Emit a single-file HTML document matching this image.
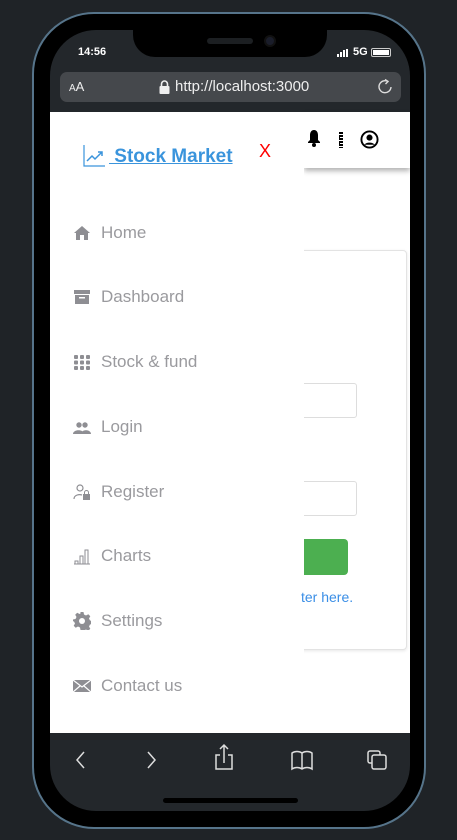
<!DOCTYPE html>
<html><head><style>
*{margin:0;padding:0;box-sizing:border-box}
body{width:457px;height:840px;background:#1f2327;position:relative;overflow:hidden;font-family:"Liberation Sans",sans-serif}
.frame{position:absolute;left:32px;top:12px;width:394px;height:817px;border-radius:62px;border:2px solid #56748a;background:#000}
.screen{position:absolute;left:50px;top:30px;width:360px;height:781px;border-radius:46px;background:#23272b;overflow:hidden}
.notch{position:absolute;left:83px;top:-10px;width:194px;height:37px;background:#000;border-radius:0 0 22px 22px}
.speaker{position:absolute;left:157px;top:8px;width:46px;height:6px;border-radius:3px;background:#1c1f22}
.cam{position:absolute;left:214px;top:5px;width:12px;height:12px;border-radius:6px;background:#1a1d2a;border:2px solid #111}
.web{position:absolute;left:0;top:82px;width:360px;height:621px;background:#fff}
.bar{position:absolute;left:10px;top:42px;width:341px;height:30px;border-radius:7px;background:#45484c;color:#eee;font-size:14px}
.side{position:absolute;left:0;top:0;width:254px;height:621px;background:#fff}
.item{position:absolute;left:23px;color:#9a9a9e;font-size:17px;display:flex;align-items:center}
.item svg{width:18px;height:18px;margin-right:10px;fill:#8e8e93}
</style></head><body>
<div class="frame"></div>
<div class="screen">
 <div style="position:absolute;left:28px;top:16px;color:#fff;font-size:11px;font-weight:bold">14:56</div>
 <div style="position:absolute;left:287px;top:19px;display:flex;align-items:flex-end;gap:1px"><i style="width:2px;height:3px;background:#fff"></i><i style="width:2px;height:5px;background:#fff"></i><i style="width:2px;height:7px;background:#fff"></i><i style="width:2px;height:8px;background:#fff"></i></div>
 <div style="position:absolute;left:303px;top:16px;color:#fff;font-size:11px;font-weight:bold">5G</div>
 <div style="position:absolute;left:321px;top:18px;width:20px;height:9px;border:1px solid #ccc;border-radius:2px;padding:1px"><div style="background:#fff;width:100%;height:100%"></div></div>
 <div class="bar"><span style="position:absolute;left:9px;top:7px;font-size:13px"><small style="font-size:10px">A</small>A</span>
  <svg style="position:absolute;left:99px;top:8px" width="11" height="14" viewBox="0 0 11 14"><rect x="0.5" y="6" width="10" height="8" rx="1" fill="#eee"/><path d="M2.5 6V4a3 3 0 0 1 6 0v2" fill="none" stroke="#eee" stroke-width="1.6"/></svg>
  <span style="position:absolute;left:115px;top:6px;font-size:15px">http://localhost:3000</span>
  <svg style="position:absolute;left:316px;top:6px" width="18" height="18" viewBox="0 0 18 18"><path d="M12 3.5A6 6 0 1 0 15 9" fill="none" stroke="#ddd" stroke-width="1.4"/><path d="M9 1.5l3 2-2.5 2.5" fill="none" stroke="#ddd" stroke-width="1.4"/></svg></div>
 <div class="web">
  <div style="position:absolute;left:254px;top:0;width:106px;height:56px;background:#fff;box-shadow:0 3px 5px rgba(0,0,0,.3)"></div>
  <svg style="position:absolute;left:257px;top:17px" width="14" height="18" viewBox="0 0 14 18"><path d="M7 1C4 1 3 4 3 6v5L1 13v1h12v-1l-2-2V6c0-2-1-5-4-5z"/><circle cx="7" cy="16" r="2"/></svg>
  <div style="position:absolute;left:289px;top:20px;width:4px;height:16px;background:repeating-linear-gradient(#000 0 2px,#fff 2px 3px);border-left:1px dotted #000"></div>
  <svg style="position:absolute;left:310px;top:18px" width="19" height="19" viewBox="0 0 20 20"><circle cx="10" cy="10" r="8.5" fill="none" stroke="#000" stroke-width="2"/><circle cx="10" cy="8" r="3.2"/><path d="M4.5 15.5c2-3 9-3 11 0" fill="#000"/></svg>
  <div style="position:absolute;left:250px;top:138px;width:107px;height:400px;border:1px solid #e3e3e3;border-radius:4px;background:#fff;box-shadow:0 1px 3px rgba(0,0,0,.1)"></div>
  <div style="position:absolute;left:250px;top:271px;width:57px;height:35px;border:1px solid #ddd;border-radius:3px"></div>
  <div style="position:absolute;left:250px;top:369px;width:57px;height:35px;border:1px solid #ddd;border-radius:3px"></div>
  <div style="position:absolute;left:250px;top:427px;width:48px;height:36px;background:#4caf50;border-radius:4px"></div>
  <div class="side">
   <div style="position:absolute;left:33px;top:31px;display:flex;align-items:flex-end;color:#3a94dc;font-size:19px;font-weight:bold;text-decoration:underline">
    <svg width="22" height="25" viewBox="0 0 22 25" style="margin-right:4px"><path d="M1 2v21h21" fill="none" stroke="#3a94dc" stroke-width="1.2"/><path d="M4 18l5-5 3 3 7-7M15 9h4v4" fill="none" stroke="#3a94dc" stroke-width="1.5"/></svg>
    <span>&nbsp;Stock Market</span></div>
   <div style="position:absolute;left:209px;top:29px;color:#f00;font-size:18px">X</div>
   <div class="item" style="top:111px"><svg viewBox="0 0 18 18"><path d="M9 2L1 9h2v7h4v-5h4v5h4V9h2z"/></svg>Home</div>
   <div class="item" style="top:175px"><svg viewBox="0 0 18 18"><rect x="1" y="2" width="16" height="4"/><path d="M2 7h14v9H2z"/><rect x="6" y="9" width="6" height="1.5" fill="#fff"/></svg>Dashboard</div>
   <div class="item" style="top:240px"><svg viewBox="0 0 18 18"><g><rect x="1" y="2" width="4" height="4" rx="1"/><rect x="7" y="2" width="4" height="4" rx="1"/><rect x="13" y="2" width="4" height="4" rx="1"/><rect x="1" y="7.5" width="4" height="4" rx="1"/><rect x="7" y="7.5" width="4" height="4" rx="1"/><rect x="13" y="7.5" width="4" height="4" rx="1"/><rect x="1" y="13" width="4" height="4" rx="1"/><rect x="7" y="13" width="4" height="4" rx="1"/><rect x="13" y="13" width="4" height="4" rx="1"/></g></svg>Stock &amp; fund</div>
   <div class="item" style="top:305px"><svg viewBox="0 0 18 18"><circle cx="6" cy="7" r="2.7"/><circle cx="12" cy="7" r="2.7"/><path d="M0 16c0-5 11-5 11 0zM8 16c0-5 10-5 10 0z"/></svg>Login</div>
   <div class="item" style="top:370px"><svg viewBox="0 0 18 18"><circle cx="7" cy="5" r="3" fill="none" stroke="#8e8e93" stroke-width="1.2"/><path d="M1 16c0-4 5-5 8-4" fill="none" stroke="#8e8e93" stroke-width="1.2"/><rect x="10" y="11" width="7" height="6"/><path d="M11.5 11V9.5a2 2 0 0 1 4 0V11" fill="none" stroke="#8e8e93"/></svg>Register</div>
   <div class="item" style="top:434px"><svg viewBox="0 0 18 18" style="fill:none;stroke:#8e8e93;stroke-width:1"><path d="M1 17h16M2 17v-3h3v3M7 17V9h3v8M12 17V3h3v14"/></svg>Charts</div>
   <div class="item" style="top:499px"><svg viewBox="0 0 18 18"><path d="M7.5 0h3l.5 2.5 2 1 2.3-1.3 2 2-1.3 2.3 1 2 2.5.5v3l-2.5.5-1 2 1.3 2.3-2 2-2.3-1.3-2 1L10.5 18h-3L7 15.5l-2-1-2.3 1.3-2-2L2 11.5l-1-2L-1.5 9 0 7.5l2.5-.5 1-2L2.2 2.7l2-2L6.5 2l1-.5z"/><circle cx="9" cy="9" r="3" fill="#fff"/></svg>Settings</div>
   <div class="item" style="top:564px"><svg viewBox="0 0 18 18"><rect x="0" y="3" width="18" height="12"/><path d="M0 3l9 7 9-7M0 15l7-6M18 15l-7-6" fill="none" stroke="#fff" stroke-width="1.2"/></svg>Contact us</div>
  </div>
  <div style="position:absolute;left:251px;top:477px;color:#3a8ee6;font-size:14px">ter here.</div>
 </div>
 <svg style="position:absolute;left:0;top:703px" width="360" height="78" viewBox="0 0 360 78" fill="none" stroke="#ddd" stroke-width="1.5">
  <path d="M34 19l-7 8 7 8"/><path d="M98 19l7 8-7 8"/>
  <path d="M170 22h-4v14h16V22h-4M174 30V12M170 16l4-4 4 4"/>
  <path d="M252 20c3-2 7-2 10 0v16c-3-2-7-2-10 0c-3-2-7-2-10 0V20c3-2 7-2 10 0zM252 20v16"/>
  <rect x="318" y="18" width="12" height="12" rx="2"/><rect x="322" y="22" width="14" height="14" rx="2" fill="#23272b"/>
 </svg>
 <div style="position:absolute;left:113px;top:768px;width:135px;height:5px;border-radius:3px;background:#000"></div>
 <div class="notch"></div><div class="speaker"></div><div class="cam"></div>
</div>
</body></html>
